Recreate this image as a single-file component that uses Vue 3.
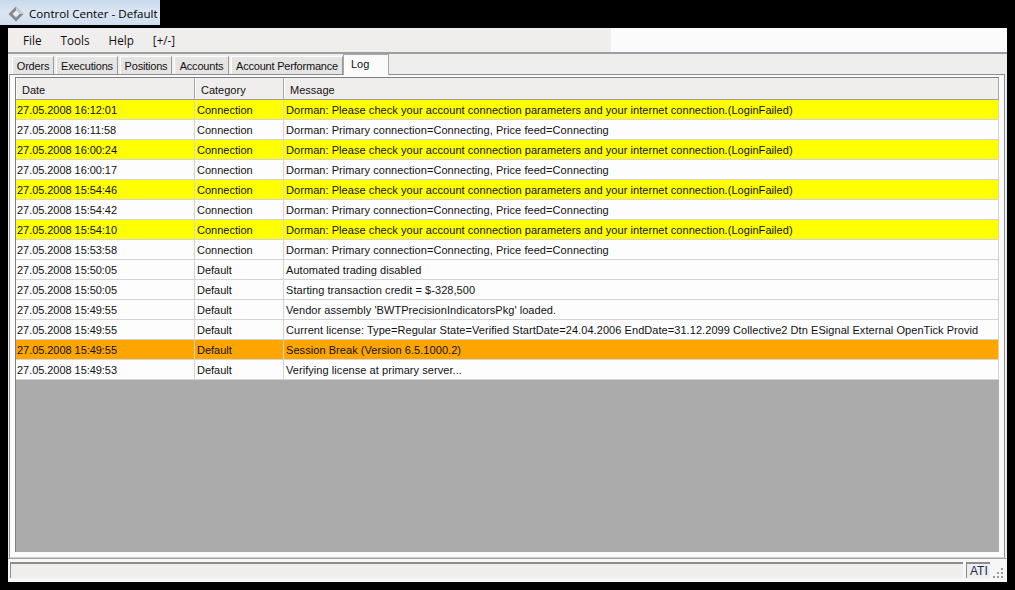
<script setup>
const menus = ['File', 'Tools', 'Help', '[+/-]']
const tabs = [
  { label: 'Orders', w: 42 },
  { label: 'Executions', w: 62 },
  { label: 'Positions', w: 52 },
  { label: 'Accounts', w: 55 },
  { label: 'Account Performance', w: 112 }
]
const fail = 'Dorman: Please check your account connection parameters and your internet connection.(LoginFailed)'
const conn = 'Dorman: Primary connection=Connecting, Price feed=Connecting'
const rows = [
  ['27.05.2008 16:12:01', 'Connection', fail, 'y'],
  ['27.05.2008 16:11:58', 'Connection', conn, ''],
  ['27.05.2008 16:00:24', 'Connection', fail, 'y'],
  ['27.05.2008 16:00:17', 'Connection', conn, ''],
  ['27.05.2008 15:54:46', 'Connection', fail, 'y'],
  ['27.05.2008 15:54:42', 'Connection', conn, ''],
  ['27.05.2008 15:54:10', 'Connection', fail, 'y'],
  ['27.05.2008 15:53:58', 'Connection', conn, ''],
  ['27.05.2008 15:50:05', 'Default', 'Automated trading disabled', ''],
  ['27.05.2008 15:50:05', 'Default', 'Starting transaction credit = $-328,500', ''],
  ['27.05.2008 15:49:55', 'Default', "Vendor assembly 'BWTPrecisionIndicatorsPkg' loaded.", ''],
  ['27.05.2008 15:49:55', 'Default', 'Current license: Type=Regular State=Verified StartDate=24.04.2006 EndDate=31.12.2099 Collective2 Dtn ESignal External OpenTick Provid', ''],
  ['27.05.2008 15:49:55', 'Default', 'Session Break (Version 6.5.1000.2)', 'o'],
  ['27.05.2008 15:49:53', 'Default', 'Verifying license at primary server...', '']
]
</script>

<template>
  <div class="screen">
    <div class="titlebar">
      <svg class="appicon" width="18" height="18" viewBox="0 0 18 18">
        <path d="M9 1.5 16.5 9 9 16.5 1.5 9Z" fill="#85888e" />
        <path d="M9 1.5 16.5 9 9 9Z" fill="#c8cbcf" />
        <path d="M9 5.5 12.5 9 9 12.5 5.5 9Z" fill="#eceef1" />
      </svg>
      <span>Control Center - Default</span>
    </div>
    <div class="window">
      <div class="menubar">
        <div class="menu">
          <span v-for="m in menus" :key="m" class="menuitem">{{ m }}</span>
        </div>
      </div>
      <div class="body">
        <div class="tabstrip">
          <div v-for="t in tabs" :key="t.label" class="tab" :style="{ width: t.w + 'px' }">{{ t.label }}</div>
          <div class="tab active">Log</div>
        </div>
        <div class="panel">
          <div class="grid">
            <div class="row head">
              <div class="cell">Date</div>
              <div class="cell">Category</div>
              <div class="cell">Message</div>
            </div>
            <div v-for="(r, i) in rows" :key="i" class="row data" :class="{ yellow: r[3] === 'y', orange: r[3] === 'o' }">
              <div class="cell date">{{ r[0] }}</div>
              <div class="cell">{{ r[1] }}</div>
              <div class="cell msg">{{ r[2] }}</div>
            </div>
            <div class="empty"></div>
          </div>
        </div>
      </div>
      <div class="status">
        <div class="statusmain"></div>
        <div class="statusati">ATI</div>
        <svg class="grip" width="12" height="12" viewBox="0 0 12 12">
          <g fill="#9a9a9a">
            <rect x="8" y="1" width="2" height="2" />
            <rect x="8" y="5" width="2" height="2" />
            <rect x="4" y="5" width="2" height="2" />
            <rect x="8" y="9" width="2" height="2" />
            <rect x="4" y="9" width="2" height="2" />
            <rect x="0" y="9" width="2" height="2" />
          </g>
        </svg>
      </div>
    </div>
  </div>
</template>

<style scoped>
.screen {
  width: 1015px;
  height: 590px;
  background: #000;
  overflow: hidden;
  font-family: "Liberation Sans", Arial, sans-serif;
  font-size: 11px;
  color: #111;
}
.titlebar {
  width: 160px;
  height: 25px;
  box-sizing: border-box;
  margin-bottom: 3px;
  padding: 2px 0 0 7px;
  display: flex;
  align-items: center;
  gap: 4px;
  background: linear-gradient(#c9d9ec, #dbe6f3 50%, #cfdeef);
  font-family: "Open Sans", sans-serif;
  font-size: 11.6px;
  color: #000;
  white-space: nowrap;
}
.appicon { flex: none; }
.window {
  margin-left: 8px;
  width: 999px;
  height: 554px;
  background: #fbfbfb;
  display: flex;
  flex-direction: column;
}
.menubar {
  height: 24px;
  flex: none;
  border-bottom: 2px solid #9b9ea2;
  box-sizing: content-box;
}
.menu {
  width: 603px;
  height: 24px;
  background: #f0eded;
  display: flex;
  align-items: center;
  padding-left: 15px;
  box-sizing: border-box;
  font-family: "Open Sans", sans-serif;
  font-size: 11.7px;
  color: #111;
}
.menuitem { margin-right: 19px; }
.body {
  flex: 1;
  background: #f0eded;
  display: flex;
  flex-direction: column;
  padding-left: 1px;
  padding-right: 2px;
}
.tabstrip {
  height: 20px;
  flex: none;
  display: flex;
  gap: 2px;
  padding-left: 3px;
  align-items: flex-end;
  position: relative;
  z-index: 1;
}
.tab {
  height: 18px;
  box-sizing: border-box;
  background: #e6e3e3;
  border: 1px solid #fff;
  border-right-color: #9b9b9b;
  border-bottom: none;
  text-align: center;
  line-height: 19px;
  letter-spacing: -0.2px;
  white-space: nowrap;
  overflow: hidden;
}
.tab.active {
  width: 46px;
  height: 21px;
  margin-left: -2px;
  margin-bottom: -1px;
  background: #fbfbfb;
  border: 1px solid #a8a8a8;
  border-bottom: none;
  text-align: left;
  padding-left: 7px;
  line-height: 19px;
  letter-spacing: 0;
}
.panel {
  flex: 1;
  border: 1px solid #8a8d92;
  border-bottom-color: #d0d0d0;
  background: #fbfbfb;
  padding: 2px 5px 5px 5px;
  display: flex;
  min-height: 0;
}
.grid {
  flex: 1;
  display: flex;
  flex-direction: column;
  border-top: 1px solid #7f7f7f;
  border-left: 1px solid #7f7f7f;
  min-width: 0;
}
.row {
  display: grid;
  grid-template-columns: 179px 89px 1fr;
  flex: none;
}
.head {
  height: 22px;
  background: #f0eded;
  border-bottom: 1px solid #a0a0a0;
  box-sizing: border-box;
}
.head .cell {
  border-right: 1px solid #a8a8a8;
  border-left: 1px solid #fff;
  padding-left: 5px;
  line-height: 25px;
  overflow: hidden;
}
.data {
  height: 20px;
  background: #fdfdfd;
  border-bottom: 1px solid #d4d4d4;
  box-sizing: border-box;
}
.data .cell {
  border-right: 1px solid #d4d4d4;
  padding-left: 2px;
  line-height: 21px;
  white-space: nowrap;
  overflow: hidden;
}
.data .date {
  padding-left: 1px;
  letter-spacing: -0.05px;
}
.data .msg { letter-spacing: 0.06px; }
.yellow { background: #ffff00; }
.orange { background: #ffa500; }
.empty {
  flex: 1;
  background: #ababab;
}
.status {
  height: 24px;
  flex: none;
  display: flex;
  align-items: flex-end;
  background: #f7f6f6;
  border-top: 1px solid #a0a3a7;
  padding: 0 2px 4px 2px;
  box-sizing: border-box;
  position: relative;
}
.statusmain {
  width: 953px;
  height: 16px;
  box-sizing: border-box;
  background: #f0eded;
  border-top: 2px solid #8c8c8c;
  border-left: 1px solid #8c8c8c;
}
.statusati {
  width: 24px;
  height: 16px;
  margin-left: 3px;
  box-sizing: border-box;
  background: #f0eded;
  border-top: 2px solid #8c8c8c;
  border-left: 1px solid #8c8c8c;
  font-size: 12px;
  line-height: 15px;
  padding-left: 3px;
  color: #1a2a5a;
}
.grip {
  position: absolute;
  right: 2px;
  bottom: 3px;
}
</style>
